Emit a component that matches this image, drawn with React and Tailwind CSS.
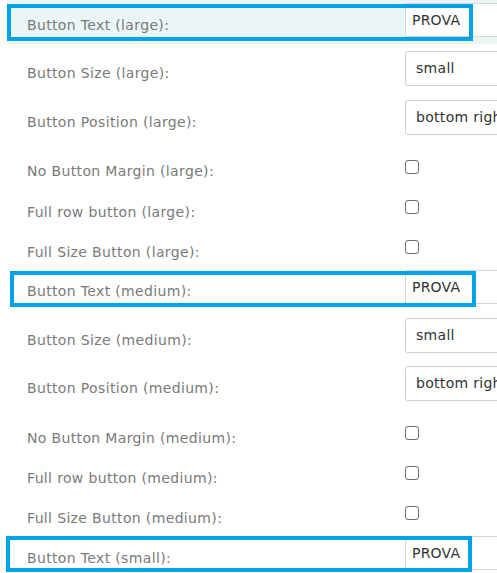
const rows = [
  { label: 'Button Text (large):', type: 'text', value: 'PROVA', h: 'h-[44px] pb-[4px]', active: true },
  { label: 'Button Size (large):', type: 'select', value: 'small', h: 'h-[49px]' },
  { label: 'Button Position (large):', type: 'select', value: 'bottom right', h: 'h-[48px]' },
  { label: 'No Button Margin (large):', type: 'check', h: 'h-[41px] pt-[10px]' },
  { label: 'Full row button (large):', type: 'check', h: 'h-[40px] pt-[10px]' },
  { label: 'Full Size Button (large):', type: 'check', h: 'h-[40px] pt-[10px]' },
  { label: 'Button Text (medium):', type: 'text', value: 'PROVA', h: 'h-[49px]' },
  { label: 'Button Size (medium):', type: 'select', value: 'small', h: 'h-[48px]' },
  { label: 'Button Position (medium):', type: 'select', value: 'bottom right', h: 'h-[49px]' },
  { label: 'No Button Margin (medium):', type: 'check', h: 'h-[40px] pt-[10px]' },
  { label: 'Full row button (medium):', type: 'check', h: 'h-[40px] pt-[10px]' },
  { label: 'Full Size Button (medium):', type: 'check', h: 'h-[40px] pt-[10px]' },
  { label: 'Button Text (small):', type: 'text', value: 'PROVA', h: 'h-[50px]' },
];

function Control({ row }) {
  if (row.type === 'text') {
    return (
      <input
        readOnly
        value={row.value}
        className="shrink-0 w-[200px] h-[34px] border border-[#d6d6d6] bg-white px-[6px] text-[14px] tracking-[0.2px] text-[#333] outline-none"
      />
    );
  }
  if (row.type === 'select') {
    return (
      <div className="shrink-0 w-[200px] h-[35px] flex items-center border border-[#cfcfcf] rounded-[3px] bg-white pl-[10px] text-[14px] tracking-[0.3px] text-[#333] whitespace-nowrap">
        {row.value}
      </div>
    );
  }
  return <div className="shrink-0 w-[14px] h-[14px] border border-[#707070] rounded-[3px] bg-white" />;
}

export default function App() {
  return (
    <div className="relative w-[497px] h-[573px] overflow-hidden bg-white font-['DejaVu_Sans',Verdana,sans-serif]">
      <div className="flex flex-col">
        {rows.map((row) => (
          <div
            key={row.label}
            className={`ml-[7px] flex items-center ${row.h} ${row.active ? 'bg-[#eaf5f6]' : ''}`}
          >
            <div className="w-[398px] shrink-0 pl-[20px] pt-[10px] text-[14px] tracking-[0.35px] text-[#7a7a7a] whitespace-nowrap">
              {row.label}
            </div>
            <Control row={row} />
          </div>
        ))}
      </div>

      {/* annotation boxes drawn over the form */}
      <div className="absolute left-[7px] top-[4px] w-[466px] h-[37px] border-[4px] border-[#00a2e8]" />
      <div className="absolute left-[10px] top-[271px] w-[466px] h-[36px] border-[4px] border-[#00a2e8]" />
      <div className="absolute left-[6px] top-[536px] w-[466px] h-[36px] border-[4px] border-[#00a2e8]" />
    </div>
  );
}
